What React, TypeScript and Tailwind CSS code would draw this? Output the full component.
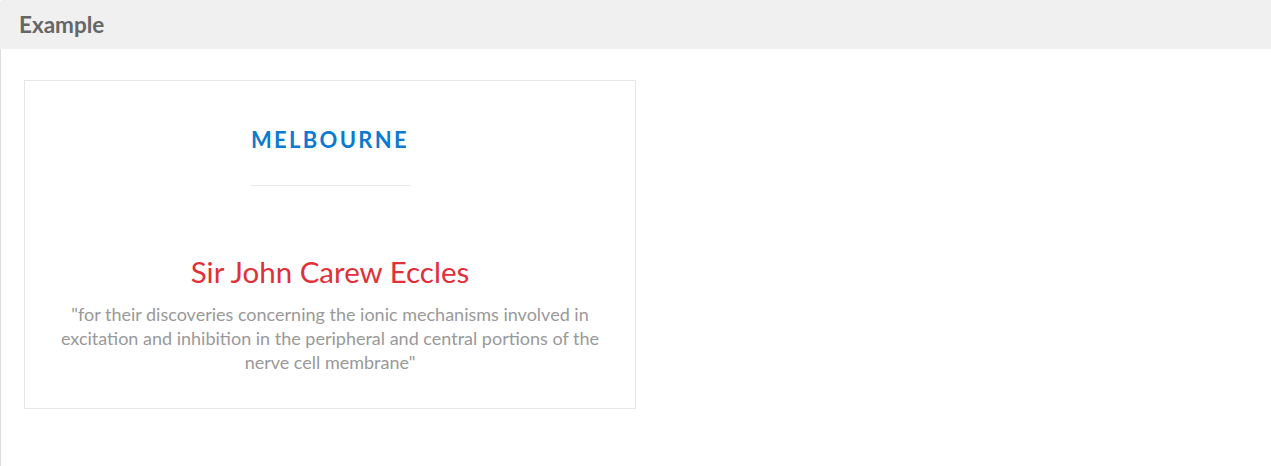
export default function App() {
  return (
    <div className="min-h-[466px] bg-white font-['Lato',sans-serif]">
      <div className="h-[49px] bg-[#f0f0f0] rounded-tl-[3px] flex items-center px-[19px]">
        <h1 className="text-[22.5px] font-bold text-[#666666]">Example</h1>
      </div>
      <div className="min-h-[417px] border-l border-[#dddddd] pt-[31px] pl-[23px]">
        <div className="w-[612px] h-[329px] border border-[#e6e6e6] flex flex-col items-center px-[30px]">
          <div className="mt-[44px] text-[22px] font-bold tracking-[2.3px] text-[#0b7ad0] leading-[30px]">
            MELBOURNE
          </div>
          <div className="mt-[30px] w-[159px] h-px bg-[#e8e8e8]" />
          <div className="mt-[68px] text-[29.5px] text-[#e0303a] leading-[36px]">Sir John Carew Eccles</div>
          <p className="mt-[12px] text-center text-[18px] leading-[24px] text-[#999999]">
            "for their discoveries concerning the ionic mechanisms involved in excitation and inhibition in the
            peripheral and central portions of the nerve cell membrane"
          </p>
        </div>
      </div>
    </div>
  );
}
